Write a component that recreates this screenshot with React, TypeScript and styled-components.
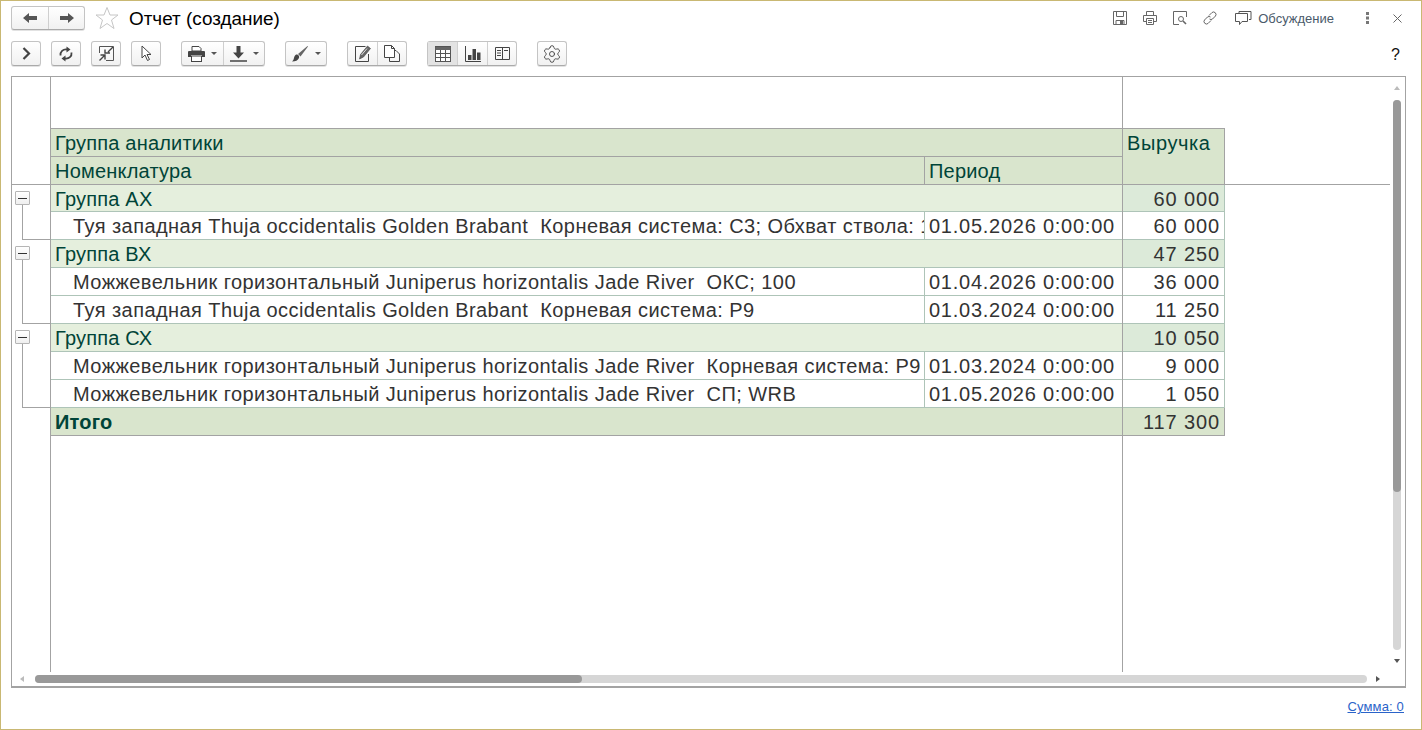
import React from "react";
import styled, { createGlobalStyle } from "styled-components";
import { Settings } from "lucide-react";

const GlobalStyle = createGlobalStyle`
  html, body {
    margin: 0;
    padding: 0;
    background: #fff;
    font-family: "Liberation Sans", Arial, sans-serif;
  }
  * { box-sizing: border-box; }
`;

const Frame = styled.div`
  width: 1422px;
  height: 730px;
  border: 1px solid #c9b873;
  display: flex;
  flex-direction: column;
  overflow: hidden;
`;

const TitleBar = styled.div`
  height: 38px;
  padding: 5px 0 0 10px;
  display: flex;
  align-items: flex-start;
`;

const Title = styled.h1`
  margin: 2px 0 0 10px;
  font-size: 18.9px;
  line-height: 22px;
  font-weight: 400;
  color: #000;
`;

const StarWrap = styled.span`
  margin-left: 10px;
  display: flex;
  height: 24px;
  align-items: center;
`;

const TitleActions = styled.div`
  margin-left: auto;
  height: 24px;
  display: flex;
  align-items: center;
  color: #5f6a75;
`;

const HeadIcon = styled.span<{ $gap?: number }>`
  display: flex;
  margin-left: ${(p) => p.$gap ?? 14}px;
`;

const Discuss = styled.span`
  font-size: 13px;
  color: #4a5a6a;
  margin-left: 6px;
  margin-right: 28px;
`;

const Toolbar = styled.div`
  height: 25px;
  margin-top: 2px;
  padding-left: 10px;
  display: flex;
  align-items: flex-start;
`;

const BtnGroup = styled.div<{ $gap?: number; $h?: number }>`
  display: flex;
  height: ${(p) => p.$h ?? 25}px;
  margin-left: ${(p) => p.$gap ?? 0}px;
  border: 1px solid #c4c4c4;
  border-bottom-color: #aaa;
  border-radius: 3px;
  background: linear-gradient(#fff, #f1f1f1);
  box-shadow: 0 1px 0 #e2e2e2;
`;

const Btn = styled.button<{ $w: number; $active?: boolean }>`
  width: ${(p) => p.$w}px;
  padding: 0;
  border: 0;
  background: ${(p) => (p.$active ? "#e3e3e3" : "transparent")};
  display: flex;
  align-items: center;
  justify-content: center;
  gap: 6px;
  & + & {
    border-left: 1px solid #cfcfcf;
  }
`;

const Caret = styled.span`
  width: 0;
  height: 0;
  border-left: 3px solid transparent;
  border-right: 3px solid transparent;
  border-top: 3px solid #555;
`;

const Help = styled.span`
  margin-left: auto;
  margin-right: 21px;
  margin-top: 5px;
  font-size: 16px;
  line-height: 18px;
  color: #111;
`;

const ReportBox = styled.div`
  margin: 10px 0 0 10px;
  width: 1395px;
  height: 612px;
  border: 1px solid #a3a3a3;
  border-bottom-width: 2px;
  display: flex;
  flex-direction: column;
`;

const ReportBody = styled.div`
  flex: 1;
  display: flex;
  min-height: 0;
`;

const Sheet = styled.div`
  position: relative;
  flex: 1;
  display: flex;
  min-width: 0;
  height: 595px;
`;

// закреплённые линии шапки и колонок
const FreezeRow = styled.div`
  position: absolute;
  left: 0;
  right: -1px;
  top: 107px;
  height: 1px;
  background: #a3a3a3;
`;

const FreezeCol = styled.div`
  position: absolute;
  top: 0;
  bottom: 0;
  left: 1110px;
  width: 1px;
  background: #a3a3a3;
`;

const Gutter = styled.div`
  width: 39px;
  border-right: 1px solid #a3a3a3;
  padding-top: 108px;
  display: flex;
  flex-direction: column;
`;

const Outline = styled.div<{ $height: number }>`
  height: ${(p) => p.$height}px;
  display: flex;
  flex-direction: column;
  padding-left: 3px;
`;

const MinusBox = styled.div`
  margin-top: 6px;
  width: 15px;
  height: 14px;
  border: 1px solid #b5b5b5;
  border-radius: 1px;
  background: linear-gradient(#fff, #efefef);
  display: flex;
  align-items: center;
  justify-content: center;
  &::before {
    content: "";
    width: 9px;
    height: 1px;
    background: #333;
  }
`;

const Bracket = styled.div`
  flex: 1;
  margin-left: 7px;
  border-left: 1px solid #a3a3a3;
  border-bottom: 1px solid #a3a3a3;
`;

const Main = styled.div`
  padding-top: 51px;
`;

const Table = styled.div`
  display: grid;
  grid-template-columns: 874px 198px 102px;
  grid-template-rows: 28px 28px 27px;
  grid-auto-rows: 28px;
  border-top: 1px solid #a3a3a3;
`;

type CellKind = "head" | "group" | "item" | "total";

const bg: Record<CellKind, string> = {
  head: "#d9e5cd",
  group: "#e5efdd",
  item: "#ffffff",
  total: "#d9e5cd",
};

const Cell = styled.div<{
  $kind: CellKind;
  $span?: number;
  $tall?: boolean;
  $sum?: boolean;
  $date?: boolean;
  $indent?: boolean;
  $soft?: boolean;
}>`
  grid-column: span ${(p) => p.$span ?? 1};
  grid-row: span ${(p) => (p.$tall ? 2 : 1)};
  background: ${(p) => (p.$kind === "group" && p.$sum ? "#dcead9" : bg[p.$kind])};
  border-right: 1px solid ${(p) => (p.$soft ? "#aec4b8" : "#a3a3a3")};
  border-bottom: 1px solid ${(p) => (p.$soft ? "#aec4b8" : "#a3a3a3")};
  color: ${(p) => (p.$kind === "item" || p.$sum ? "#333" : "#004438")};
  font-size: 20px;
  font-weight: ${(p) => (p.$kind === "total" && !p.$sum ? 700 : 400)};
  letter-spacing: ${(p) =>
    p.$sum ? 0.9 : p.$date ? 0.75 : p.$tall ? 0.6 : p.$kind === "item" ? 0.43 : 0.2}px;
  line-height: 29px;
  padding: 0 4px 0 ${(p) => (p.$indent ? 22 : 4)}px;
  text-align: ${(p) => (p.$sum ? "right" : "left")};
  white-space: pre;
  overflow: hidden;
`;

const VScroll = styled.div`
  width: 16px;
  padding: 9px 4px 0;
  display: flex;
  flex-direction: column;
  align-items: center;
`;

const HScroll = styled.div`
  height: 15px;
  padding: 1px 0 0 8px;
  display: flex;
  align-items: center;
`;

const Track = styled.div<{ $horizontal?: boolean }>`
  background: #d6d6d6;
  border-radius: 4px;
  ${(p) =>
    p.$horizontal
      ? "width: 1332px; height: 8px; margin: 0 9px 0 11px;"
      : "width: 8px; height: 550px; margin: 10px 0 9px;"}
`;

const Thumb = styled.div<{ $horizontal?: boolean }>`
  background: #999;
  border-radius: 4px;
  ${(p) => (p.$horizontal ? "width: 547px; height: 100%;" : "height: 392px; width: 100%;")}
`;

const Arrow = styled.span<{ $dir: "up" | "down" | "left" | "right"; $dim?: boolean }>`
  width: 0;
  height: 0;
  flex: none;
  border: 3px solid transparent;
  ${(p) => {
    const c = p.$dim ? "#bbb" : "#555";
    if (p.$dir === "up") return `border-top-width:0;border-bottom:4px solid ${c};`;
    if (p.$dir === "down") return `border-bottom-width:0;border-top:4px solid ${c};`;
    if (p.$dir === "left") return `border-left-width:0;border-right:4px solid ${c};`;
    return `border-right-width:0;border-left:4px solid ${c};`;
  }}
`;

const Footer = styled.div`
  flex: 1;
  display: flex;
  justify-content: flex-end;
  padding: 11px 17px 0 0;
`;

const SumLink = styled.a`
  font-size: 13px;
  line-height: 16px;
  height: 16px;
  color: #2a63c9;
  text-decoration: underline;
  letter-spacing: 0.15px;
`;

const Ico: React.FC<{ w?: number; h?: number; children: React.ReactNode }> = ({ w = 16, h = 16, children }) => (
  <svg width={w} height={h} viewBox={`0 0 ${w} ${h}`} fill="none">
    {children}
  </svg>
);

const icons: Record<string, React.ReactNode> = {
  back: (
    <Ico w={14} h={12}>
      <path d="M0 6 6 1v3h8v4H6v3z" fill="#555" />
    </Ico>
  ),
  forward: (
    <Ico w={14} h={12}>
      <path d="M14 6 8 1v3H0v4h8v3z" fill="#555" />
    </Ico>
  ),
  chevron: (
    <Ico w={9} h={13}>
      <path d="M1.500 1 7 6.500 1.500 12" stroke="#444" strokeWidth="2.200" />
    </Ico>
  ),
  refresh: (
    <Ico w={14} h={16}>
      <path d="M1.500 9.500C1 5.500 4 3 8 3.500" stroke="#444" strokeWidth="1.800" />
      <path d="M7.500 0.500 11.500 3.500 7.500 6.500z" fill="#444" />
      <path d="M12.500 6.500C13 10.500 10 13 6 12.500" stroke="#444" strokeWidth="1.800" />
      <path d="M6.500 9.500 2.500 12.500 6.500 15.500z" fill="#444" />
    </Ico>
  ),
  fit: (
    <Ico w={17} h={17}>
      <path d="M1.500 8V1.500h14v14H8" stroke="#555" />
      <path d="M15 2 10 7M7 4.500V8h5" stroke="#444" strokeWidth="1.400" />
      <path d="M1.500 15.500 7 10M2.500 10H7v4.500" stroke="#444" strokeWidth="1.400" />
    </Ico>
  ),
  cursor: (
    <Ico w={13} h={17}>
      <path d="M2 1v12l3-3 2.500 5.500 2-1L7 9.500h4z" fill="#fff" stroke="#444" />
    </Ico>
  ),
  printer: (
    <Ico w={17} h={16}>
      <path d="M4 .5h7l2 2V5H4z" fill="#fff" stroke="#444" />
      <path d="M1 5h15a1 1 0 0 1 1 1v5h-3V9H3v2H0V6a1 1 0 0 1 1-1z" fill="#444" />
      <rect x="3.500" y="10" width="10" height="5.500" fill="#fff" stroke="#444" />
    </Ico>
  ),
  download: (
    <Ico w={17} h={16}>
      <path d="M6.500 0h4v6.500h3.500l-5.500 6-5.500-6h3.500z" fill="#444" />
      <path d="M0 15h17" stroke="#444" strokeWidth="1.500" />
    </Ico>
  ),
  brush: (
    <Ico w={18} h={17}>
      <path d="M7 9 16.500 1l.5.500L9.500 11.500z" fill="#666" />
      <path d="M1 16.500c2.500-1.500 1.500-5 3.500-6.500 2-1.500 4.500 1 3.500 3-1 2.500-3.500 3.500-7 3.500z" fill="#444" />
    </Ico>
  ),
  edit: (
    <Ico w={16} h={17}>
      <path d="M13.500 9v7.500H.5V1.500h10" stroke="#444" />
      <path d="M4.500 14l1-4.500L12.500 1 15.500 3.500 8.500 12z" fill="#666" stroke="#444" strokeWidth=".6" />
      <path d="M6.500 10 12 3.500" stroke="#fff" strokeWidth=".8" />
    </Ico>
  ),
  copy: (
    <Ico w={16} h={17}>
      <path d="M.5.500h7l3 3v9H.5z" fill="#fff" stroke="#444" />
      <path d="M7.500.500v3h3" stroke="#444" />
      <path d="M10.500 5.500h1.500l3.500 3.500v7.500H5.500v-4" stroke="#444" />
    </Ico>
  ),
  grid: (
    <Ico w={16} h={16}>
      <rect x=".5" y=".5" width="15" height="15" fill="#fff" stroke="#555" />
      <path d="M.5 1h15v3H.5z" fill="#666" />
      <path d="M.5 7.500h15M.5 11.500h15M5.500 4v11M10.500 4v11" stroke="#555" />
    </Ico>
  ),
  chart: (
    <Ico w={16} h={16}>
      <path d="M.5 0v15.500H16" stroke="#444" />
      <path d="M3 9h3.500v5H3zM7.500 3H11v11H7.500zM12 6.500h3.500V14H12z" fill="#444" />
    </Ico>
  ),
  book: (
    <Ico w={15} h={13}>
      <path d="M.5.500h14v12H.5zM7.500.500v12" stroke="#444" />
      <path d="M2 3.500h4M2 6h4M2 8.500h4M9 3.500h4" stroke="#444" />
    </Ico>
  ),
  save: (
    <Ico>
      <path d="M1.500 1.500h13v13h-13z" stroke="#666" />
      <path d="M4.500 1.500v5h7v-5M4 14.500v-4h8v4" stroke="#666" />
      <path d="M8 11h3v3H8z" fill="#666" />
    </Ico>
  ),
  print: (
    <Ico>
      <path d="M4.500 5V1.500h7V5M4 11.500H1.500v-6h13v6H12" stroke="#666" />
      <path d="M4.500 8.500h7v6h-7zM6 10.500h4M6 12.500h4" stroke="#666" />
    </Ico>
  ),
  preview: (
    <Ico>
      <path d="M14.500 7V1.500h-13v13H7" stroke="#666" />
      <circle cx="9" cy="9" r="2.500" stroke="#666" />
      <path d="m11 11 3 3" stroke="#666" strokeWidth="1.600" />
    </Ico>
  ),
  link: (
    <Ico>
      <path
        d="M7 5.500 10 2.500a2.500 2.500 0 0 1 3.500 3.500L10.500 9a2.500 2.500 0 0 1-3 0M9 10.500 6 13.500a2.500 2.500 0 0 1-3.500-3.500L5.500 7a2.500 2.500 0 0 1 3 0"
        stroke="#666"
      />
    </Ico>
  ),
  chat: (
    <Ico w={17} h={17}>
      <path d="M4 3.500V1.500h12v8h-2" stroke="#555" />
      <path d="M.5 3.500h12v8H7l-2.500 3v-3h-4z" fill="#fff" stroke="#555" />
    </Ico>
  ),
  dots: (
    <Ico w={4} h={12}>
      <path d="M0 0h3v3H0zM0 4.500h3v3H0zM0 9h3v3H0z" fill="#777" />
    </Ico>
  ),
  close: (
    <Ico w={9} h={9}>
      <path d="m.5.500 8 8m0-8-8 8" stroke="#666" />
    </Ico>
  ),
};

const star = (
  <svg width="24" height="24" viewBox="0 0 24 24" fill="none">
    <path d="M12 1.500 15 9h8l-6.500 5 2.500 8.500L12 17.500 5 22.500 7.500 14 1 9h8z" fill="#fff" stroke="#c6c6c6" />
  </svg>
);

type Row = { kind: "group" | "item"; name: string; period?: string; sum: string };

const rows: Row[] = [
  { kind: "group", name: "Группа АХ", sum: "60 000" },
  { kind: "item", name: "Туя западная Thuja occidentalis Golden Brabant  Корневая система: С3; Обхват ствола: 1", period: "01.05.2026 0:00:00", sum: "60 000" },
  { kind: "group", name: "Группа ВХ", sum: "47 250" },
  { kind: "item", name: "Можжевельник горизонтальный Juniperus horizontalis Jade River  ОКС; 100", period: "01.04.2026 0:00:00", sum: "36 000" },
  { kind: "item", name: "Туя западная Thuja occidentalis Golden Brabant  Корневая система: Р9", period: "01.03.2024 0:00:00", sum: "11 250" },
  { kind: "group", name: "Группа СХ", sum: "10 050" },
  { kind: "item", name: "Можжевельник горизонтальный Juniperus horizontalis Jade River  Корневая система: Р9", period: "01.03.2024 0:00:00", sum: "9 000" },
  { kind: "item", name: "Можжевельник горизонтальный Juniperus horizontalis Jade River  СП; WRB", period: "01.05.2026 0:00:00", sum: "1 050" },
];

export default function App() {
  return (
    <>
      <GlobalStyle />
      <Frame>
        <TitleBar>
          <BtnGroup $h={24}>
            <Btn $w={36}>{icons.back}</Btn>
            <Btn $w={36}>{icons.forward}</Btn>
          </BtnGroup>
          <StarWrap>{star}</StarWrap>
          <Title>Отчет (создание)</Title>
          <TitleActions>
            <HeadIcon>{icons.save}</HeadIcon>
            <HeadIcon>{icons.print}</HeadIcon>
            <HeadIcon>{icons.preview}</HeadIcon>
            <HeadIcon>{icons.link}</HeadIcon>
            <HeadIcon $gap={17}>{icons.chat}</HeadIcon>
            <Discuss>Обсуждение</Discuss>
            <HeadIcon $gap={4}>{icons.dots}</HeadIcon>
            <HeadIcon $gap={23}>{icons.close}</HeadIcon>
            <HeadIcon $gap={19} />
          </TitleActions>
        </TitleBar>
        <Toolbar>
          <BtnGroup><Btn $w={28}>{icons.chevron}</Btn></BtnGroup>
          <BtnGroup $gap={10}><Btn $w={28}>{icons.refresh}</Btn></BtnGroup>
          <BtnGroup $gap={10}><Btn $w={28}>{icons.fit}</Btn></BtnGroup>
          <BtnGroup $gap={10}><Btn $w={28}>{icons.cursor}</Btn></BtnGroup>
          <BtnGroup $gap={20}>
            <Btn $w={41}>{icons.printer}<Caret /></Btn>
            <Btn $w={41}>{icons.download}<Caret /></Btn>
          </BtnGroup>
          <BtnGroup $gap={20}>
            <Btn $w={40}>{icons.brush}<Caret /></Btn>
          </BtnGroup>
          <BtnGroup $gap={20}>
            <Btn $w={29}>{icons.edit}</Btn>
            <Btn $w={29}>{icons.copy}</Btn>
          </BtnGroup>
          <BtnGroup $gap={20}>
            <Btn $w={29} $active>{icons.grid}</Btn>
            <Btn $w={30}>{icons.chart}</Btn>
            <Btn $w={29}>{icons.book}</Btn>
          </BtnGroup>
          <BtnGroup $gap={20}>
            <Btn $w={28}><Settings size={20} strokeWidth={1.1} color="#444" /></Btn>
          </BtnGroup>
          <Help>?</Help>
        </Toolbar>
        <ReportBox>
          <ReportBody>
            <Sheet>
              <FreezeRow />
              <FreezeCol />
              <Gutter>
                <Outline $height={55}><MinusBox /><Bracket /></Outline>
                <Outline $height={84}><MinusBox /><Bracket /></Outline>
                <Outline $height={84}><MinusBox /><Bracket /></Outline>
              </Gutter>
              <Main>
                <Table>
                  <Cell $kind="head" $span={2}>Группа аналитики</Cell>
                  <Cell $kind="head" $tall>Выручка</Cell>
                  <Cell $kind="head">Номенклатура</Cell>
                  <Cell $kind="head">Период</Cell>
                  {rows.map((r, i) =>
                    r.kind === "group" ? (
                      <React.Fragment key={i}>
                        <Cell $kind="group" $span={2} $soft>{r.name}</Cell>
                        <Cell $kind="group" $sum $soft>{r.sum}</Cell>
                      </React.Fragment>
                    ) : (
                      <React.Fragment key={i}>
                        <Cell $kind="item" $indent $soft>{r.name}</Cell>
                        <Cell $kind="item" $date $soft>{r.period}</Cell>
                        <Cell $kind="item" $sum $soft>{r.sum}</Cell>
                      </React.Fragment>
                    )
                  )}
                  <Cell $kind="total" $span={2}>Итого</Cell>
                  <Cell $kind="total" $sum>117 300</Cell>
                </Table>
              </Main>
            </Sheet>
            <VScroll>
              <Arrow $dir="up" $dim />
              <Track><Thumb /></Track>
              <Arrow $dir="down" />
            </VScroll>
          </ReportBody>
          <HScroll>
            <Arrow $dir="left" $dim />
            <Track $horizontal><Thumb $horizontal /></Track>
            <Arrow $dir="right" />
          </HScroll>
        </ReportBox>
        <Footer>
          <SumLink>Сумма: 0</SumLink>
        </Footer>
      </Frame>
    </>
  );
}
